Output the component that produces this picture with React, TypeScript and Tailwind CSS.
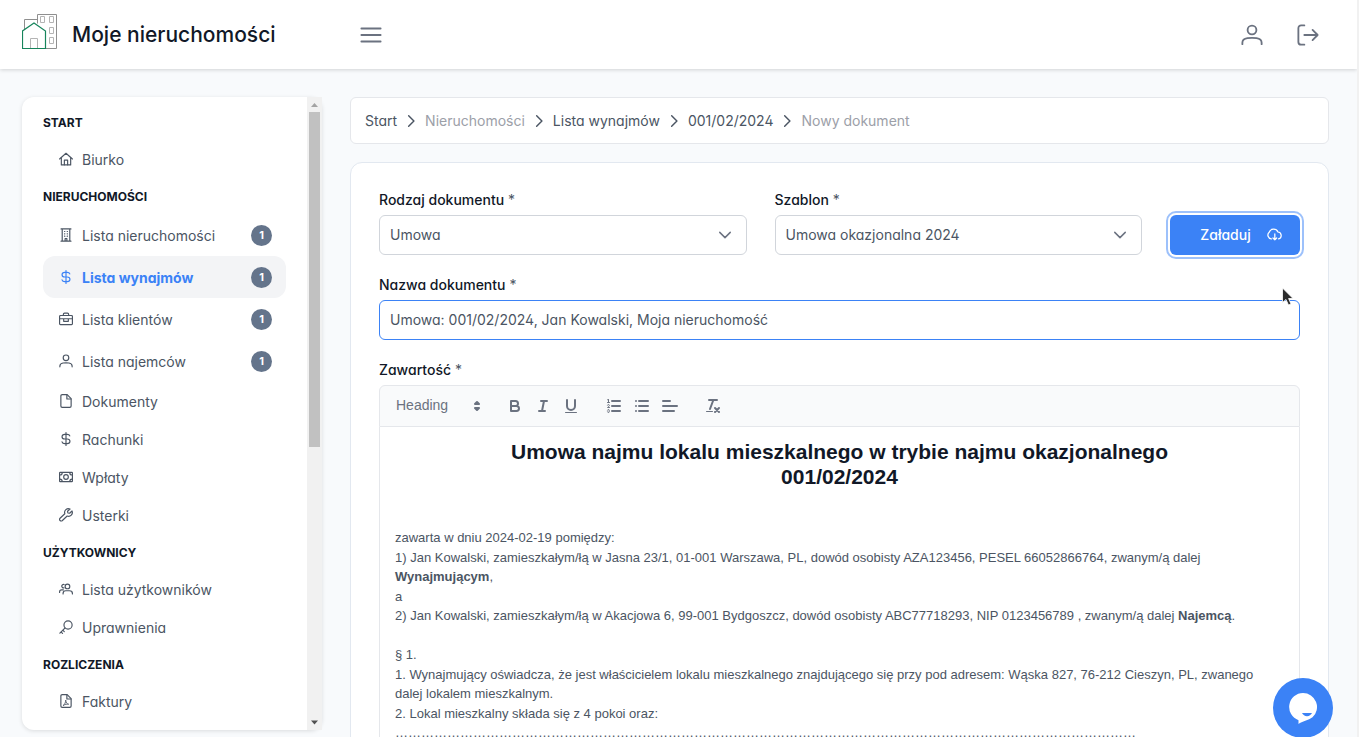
import React from "react";

type IconName =
  | "home" | "building" | "dollar" | "briefcase" | "user" | "file" | "money"
  | "wrench" | "users" | "key" | "pdf" | "bars" | "signout" | "cloud"
  | "down" | "right";

const shapes: Record<IconName, React.ReactNode> = {
  home: (
    <>
      <path d="M1 12 12 2.2 23 12" />
      <path d="M4 9.8V22.2h16V9.8" />
      <path d="M9.2 22v-8.2h5.6V22" />
    </>
  ),
  building: (
    <>
      <path d="M5.500 1.500v21M18.500 1.500v21M3.500 1.500h17M3.500 22.500h17M10.500 22v-4h3v4" />
      <path d="M9.500 6h.500M14 6h.500M9.500 10h.500M14 10h.500M9.500 14h.500M14 14h.500" />
    </>
  ),
  dollar: (
    <path d="M12 1v22M18.5 6.8C18 4.9 16.4 4 14 4h-4C7.300 4 5.200 5.600 5.200 8s2.100 4 4.800 4h4c2.700 0 4.800 1.600 4.800 4s-2.100 4-4.800 4h-4c-2.400 0-4.200-1-4.800-3" />
  ),
  briefcase: (
    <>
      <rect x="1" y="6" width="22" height="15.500" rx="1.500" />
      <path d="M7.500 6V4a2 2 0 0 1 2-2h5a2 2 0 0 1 2 2v2M1.500 11.500h21M8 11.500v4.500h8v-4.500" />
    </>
  ),
  user: (
    <>
      <circle cx="12" cy="6.500" r="4.800" />
      <path d="M1.500 22v-1.500c0-3 2.500-4.500 5.500-5 3-.500 7-.500 10 0 3 .500 5.500 2 5.500 5V22" />
    </>
  ),
  file: (
    <>
      <path d="M14 1H5.500A2.300 2.300 0 0 0 3.200 3.300v17.400A2.300 2.300 0 0 0 5.500 23h13a2.300 2.300 0 0 0 2.300-2.300V7.800z" />
      <path d="M13.500 1.500v7h7" />
    </>
  ),
  money: (
    <>
      <rect x="1" y="4" width="22" height="16" rx="1" />
      <circle cx="12" cy="12" r="4" />
      <path d="M1.500 8.500A4 4 0 0 0 5.500 4.500M18.500 4.500a4 4 0 0 0 4 4M1.500 15.500a4 4 0 0 1 4 4M18.500 19.500a4 4 0 0 1 4-4" />
    </>
  ),
  wrench: (
    <path d="M19 1.800a6.500 6.500 0 0 0-9 8L1.800 17.500a2.800 2.800 0 0 0 0 4 2.800 2.800 0 0 0 4 0L14 13.800a6.500 6.500 0 0 0 8.300-8.700L18.200 9l-3-.500-.600-3z" />
  ),
  users: (
    <>
      <circle cx="14.500" cy="7.500" r="4" />
      <path d="M7 20.500v-1c0-2.500 2-4.500 4.500-4.500h6.500c2.500 0 5 2 5 4.500v1" />
      <path d="M8.800 4.300a3 3 0 1 0-.300 5.700M1 18v-1c0-2 1.500-3.500 3.500-3.500h3" />
    </>
  ),
  key: (
    <>
      <circle cx="15.500" cy="8.500" r="7" />
      <path d="M10.500 13.500 1.500 22.500M3.500 20.500l2.500 2.500M6.500 17.500l2.500 2.500" />
    </>
  ),
  pdf: (
    <>
      <path d="M14 1H5.500A2.300 2.300 0 0 0 3.200 3.300v17.400A2.300 2.300 0 0 0 5.500 23h13a2.300 2.300 0 0 0 2.300-2.300V7.800z" />
      <path d="M13.500 1.500v7h7" />
      <path strokeWidth="1.5" d="M7.500 19.500c2.500-1.500 4-5.500 4-9 .500 4 2 6.500 5 7-3-.500-6 0-9 2z" />
    </>
  ),
  bars: <path d="M1.500 4.900h21M1.500 12h21M1.500 19.100h21" />,
  signout: (
    <>
      <path d="M8 22.500H4.500a3 3 0 0 1-3-3v-15a3 3 0 0 1 3-3H8" />
      <path d="M8 12h14.500M17 6.500l5.500 5.500-5.500 5.500" />
    </>
  ),
  cloud: (
    <>
      <path d="M7 19A6 6 0 0 1 3.500 8.500 7.500 7.500 0 0 1 17.500 8a5.600 5.600 0 0 1 1 11" />
      <path d="M12.500 11v9.500M9.500 17.500l3 3 3-3" />
    </>
  ),
  down: <path d="m3 7.500 9 9 9-9" strokeWidth="2.500" />,
  right: <path d="m8 3 9 9-9 9" strokeWidth="2.500" />,
};

function Icon({ name, className }: { name: IconName; className: string }) {
  return (
    <svg
      viewBox="0 0 24 24"
      fill="none"
      stroke="currentColor"
      strokeWidth="2"
      strokeLinecap="round"
      strokeLinejoin="round"
      aria-hidden="true"
      className={`shrink-0 ${className}`}
    >
      {shapes[name]}
    </svg>
  );
}

function Logo() {
  return (
    <svg viewBox="0 0 36 44" fill="none" className="h-11 w-9 shrink-0" aria-hidden="true">
      <g stroke="#8f8f8f">
        <path d="M24 35.500h10.500V1.500h-19v9M15.500 6.500h-13v10" />
      </g>
      <g stroke="#b4b4b4">
        <path d="M18.500 3.500h4v6h-4zM27.500 3.500h4v6h-4zM27.500 14.500h4v6h-4zM27.500 24.500h4v6h-4zM8.500 35V25.500h7V35" />
      </g>
      <path d="M.5 35.500V18L12 10l11.500 8v17.500z" stroke="#16845b" strokeWidth="1.200" />
    </svg>
  );
}

type Item = { label: string; icon: IconName; badge?: number; active?: boolean };
const menu: { title: string; items: Item[] }[] = [
  { title: "START", items: [{ label: "Biurko", icon: "home" }] },
  {
    title: "NIERUCHOMOŚCI",
    items: [
      { label: "Lista nieruchomości", icon: "building", badge: 1 },
      { label: "Lista wynajmów", icon: "dollar", badge: 1, active: true },
      { label: "Lista klientów", icon: "briefcase", badge: 1 },
      { label: "Lista najemców", icon: "user", badge: 1 },
      { label: "Dokumenty", icon: "file" },
      { label: "Rachunki", icon: "dollar" },
      { label: "Wpłaty", icon: "money" },
      { label: "Usterki", icon: "wrench" },
    ],
  },
  {
    title: "UŻYTKOWNICY",
    items: [
      { label: "Lista użytkowników", icon: "users" },
      { label: "Uprawnienia", icon: "key" },
    ],
  },
  { title: "ROZLICZENIA", items: [{ label: "Faktury", icon: "pdf" }] },
];

function Sidebar() {
  return (
    <aside className="mb-[7px] flex w-[300px] shrink-0 rounded-xl bg-white shadow-[0_1px_4px_rgba(0,0,0,0.12)]">
      <nav className="min-w-0 flex-1 overflow-hidden px-[21px] pt-[7px]">
        {menu.map((group) => (
          <section key={group.title}>
            <h2 className="flex h-9 items-center pt-0.5 text-[12px] font-bold text-[#111827]">{group.title}</h2>
            <ul>
              {group.items.map((item) => (
                <li key={item.label}>
                  <a
                    href="#"
                    className={`flex items-center gap-[9px] rounded-xl pl-4 pr-3.5 ${
                      item.badge ? "h-[42px]" : "h-[38px]"
                    } ${item.active ? "bg-[#f3f4f6] font-bold text-[#3b82f6]" : "text-[#4b5563]"}`}
                  >
                    <Icon name={item.icon} className="size-3.5" />
                    <span className="flex-1">{item.label}</span>
                    {item.badge && (
                      <span className="flex size-[21px] items-center justify-center rounded-full bg-[#64748b] text-[11px] font-bold text-white">
                        {item.badge}
                      </span>
                    )}
                  </a>
                </li>
              ))}
            </ul>
          </section>
        ))}
      </nav>
      <div className="flex w-[15px] flex-col items-center bg-[#f1f1f1]" aria-hidden="true">
        <svg viewBox="0 0 15 15" className="size-[15px] shrink-0" fill="#a3a3a3">
          <path d="M7.500 6 11 10H4z" />
        </svg>
        <div className="h-[53%] w-[11px] bg-[#c1c1c1]" />
        <svg viewBox="0 0 15 15" className="mt-auto size-[15px] shrink-0" fill="#505050">
          <path d="M7.500 9.500 11 5.500H4z" />
        </svg>
      </div>
    </aside>
  );
}

const crumbs = [
  { label: "Start" },
  { label: "Nieruchomości", muted: true },
  { label: "Lista wynajmów" },
  { label: "001/02/2024" },
  { label: "Nowy dokument", muted: true },
];

function Breadcrumb() {
  return (
    <nav className="rounded-md border border-[#e5e7eb] bg-white px-3.5 py-3">
      <ol className="flex items-center gap-[7px]">
        {crumbs.map((c, i) => (
          <li key={c.label} className="flex items-center gap-[7px]">
            {i > 0 && <Icon name="right" className="size-3.5 text-[#4b5563]" />}
            <a href="#" className={`leading-[21px] ${c.muted ? "text-[#9ca0a8]" : "text-[#4b5563]"}`}>
              {c.label}
            </a>
          </li>
        ))}
      </ol>
    </nav>
  );
}

function FieldLabel({ id, children }: { id: string; children: React.ReactNode }) {
  return (
    <label htmlFor={id} className="mb-[7px] block leading-[17px]">
      <span className="font-medium text-[#111827]">{children}</span> *
    </label>
  );
}

function SelectField({ id, label, value }: { id: string; label: string; value: string }) {
  return (
    <div className="min-w-0">
      <FieldLabel id={id}>{label}</FieldLabel>
      <div className="relative">
        <select
          id={id}
          className="h-10 w-full appearance-none rounded-md border border-[#d1d5db] bg-white px-2.5 pb-0.5 text-[#4b5563] outline-none"
        >
          <option>{value}</option>
        </select>
        <Icon name="down" className="pointer-events-none absolute right-[15px] top-[13px] size-3.5 text-[#6b7280]" />
      </div>
    </div>
  );
}

function ToolButton({ label, children }: { label: string; children: React.ReactNode }) {
  return (
    <button type="button" aria-label={label} className="flex h-6 w-7 items-center justify-center">
      <svg
        viewBox="0 0 18 18"
        className="size-[18px]"
        fill="none"
        stroke="currentColor"
        strokeWidth="2"
        strokeLinecap="round"
        strokeLinejoin="round"
      >
        {children}
      </svg>
    </button>
  );
}

function Toolbar() {
  return (
    <div className="flex items-center gap-[15px] rounded-t-md border border-[#e5e7eb] bg-[#f9fafb] p-2 text-[#6b7280]">
      <div className="relative h-6 w-[98px]">
        <select
          id="format"
          aria-label="Format"
          className="block h-6 w-full appearance-none bg-transparent pb-0.5 pl-2 font-['Liberation_Sans',Arial,sans-serif] outline-none"
        >
          <option>Heading</option>
        </select>
        <svg
          viewBox="0 0 18 18"
          className="pointer-events-none absolute right-0 top-[3px] size-[18px]"
          fill="currentColor"
          stroke="currentColor"
          strokeWidth="2"
          strokeLinejoin="round"
        >
          <path d="M7 11l2 2 2-2zM7 7l2-2 2 2z" />
        </svg>
      </div>
      <div className="flex">
        <ToolButton label="Bold">
          <path d="M5 4h4.500a2.500 2.500 0 0 1 0 5H5zM5 9h5.500a2.500 2.500 0 0 1 0 5H5z" />
        </ToolButton>
        <ToolButton label="Italic">
          <path d="M7 4h6M5 14h6M8 14l2-10" />
        </ToolButton>
        <ToolButton label="Underline">
          <path d="M5 3v6a4 4 0 0 0 8 0V3" />
          <rect x="3" y="15" width="12" height="1" rx="0.5" fill="currentColor" stroke="none" />
        </ToolButton>
      </div>
      <div className="flex">
        <ToolButton label="Ordered list">
          <path d="M7 4h8M7 9h8M7 14h8" />
          <path d="M2.500 5.500h2" strokeWidth="1" />
          <path
            d="M3.5,6A0.5,0.5,0,0,1,3,5.5V3.085l-0.276.138A0.5,0.5,0,0,1,2.053,3c-0.124-.247-0.023-0.324.224-0.447l1-.5A0.5,0.5,0,0,1,4,2.5v3A0.5,0.5,0,0,1,3.5,6Z"
            fill="currentColor"
            stroke="none"
          />
          <path
            strokeWidth="1"
            d="M4.5,10.5h-2c0-.234,1.85-1.076,1.85-2.234A0.959,0.959,0,0,0,2.5,8.156M2.5,14.846a0.959,0.959,0,0,0,1.85-.109A0.7,0.7,0,0,0,3.75,14a0.688,0.688,0,0,0,.6-0.736,0.959,0.959,0,0,0-1.85-.109"
          />
        </ToolButton>
        <ToolButton label="Bullet list">
          <path d="M6 4h9M6 9h9M6 14h9M3 4h0M3 9h0M3 14h0" />
        </ToolButton>
        <ToolButton label="Align">
          <path d="M2 9h14M2 14h11M2 4h7" />
        </ToolButton>
      </div>
      <ToolButton label="Clear formatting">
        <path d="M5 3h8M6 12 9.350 3" />
        <path d="M11 11l4 4M15 11l-4 4" />
        <rect x="2" y="14" width="7" height="1" rx="0.5" fill="currentColor" stroke="none" />
      </ToolButton>
    </div>
  );
}

function Editor() {
  return (
    <div>
      <Toolbar />
      <div
        role="textbox"
        aria-labelledby="content-label"
        className="min-h-[480px] border-x border-[#e5e7eb] px-[15px] py-3 font-['Liberation_Sans',Arial,sans-serif] text-[13px] leading-[1.5]"
      >
        <h1 className="text-center text-[21px] font-bold leading-[25px] text-[#111827]">
          Umowa najmu lokalu mieszkalnego w trybie najmu okazjonalnego
          <br />
          001/02/2024
        </h1>
        <p><br /></p>
        <p><br /></p>
        <p>zawarta w dniu 2024-02-19 pomiędzy:</p>
        <p>
          1) Jan Kowalski, zamieszkałym/łą w Jasna 23/1, 01-001 Warszawa, PL, dowód osobisty AZA123456, PESEL
          66052866764, zwanym/ą dalej <strong>Wynajmującym</strong>,
        </p>
        <p>a</p>
        <p>
          2) Jan Kowalski, zamieszkałym/łą w Akacjowa 6, 99-001 Bydgoszcz, dowód osobisty ABC77718293, NIP
          0123456789 , zwanym/ą dalej <strong>Najemcą</strong>.
        </p>
        <p><br /></p>
        <p>§ 1.</p>
        <p>
          1. Wynajmujący oświadcza, że jest właścicielem lokalu mieszkalnego znajdującego się przy pod adresem: Wąska
          827, 76-212 Cieszyn, PL, zwanego dalej lokalem mieszkalnym.
        </p>
        <p>2. Lokal mieszkalny składa się z 4 pokoi oraz:</p>
        <p>{"…".repeat(57)}</p>
      </div>
    </div>
  );
}

export default function App() {
  return (
    <div className="flex h-screen flex-col overflow-hidden border-r-2 border-[#f1f1f1] bg-[#f8fafc] font-[Inter,sans-serif] text-[14px] text-[#4b5563] [font-feature-settings:'cv02','cv03','cv04','cv11']">
      <header className="relative flex h-[69px] shrink-0 items-center bg-white pl-[22px] pr-[38px] shadow-[0_1px_4px_rgba(0,0,0,0.16)]">
        <a href="#" className="flex w-[338px] items-center gap-3.5 text-[21px] font-medium text-[#111827]">
          <Logo />
          <span>Moje nieruchomości</span>
        </a>
        <button type="button" aria-label="Menu" className="text-[#6b7280]">
          <Icon name="bars" className="size-[22px]" />
        </button>
        <div className="ml-auto flex items-center gap-[34px] text-[#6b7280]">
          <button type="button" aria-label="Profil">
            <Icon name="user" className="size-[22px]" />
          </button>
          <button type="button" aria-label="Wyloguj">
            <Icon name="signout" className="size-[22px]" />
          </button>
        </div>
      </header>

      <div className="flex min-h-0 flex-1 gap-7 pl-[22px] pr-7 pt-7">
        <Sidebar />
        <main className="min-w-0 flex-1">
          <Breadcrumb />
          <form className="mt-[18px] flex flex-col gap-[21px] rounded-xl border border-[#e2e8f0] bg-white p-7">
            <div className="grid grid-cols-[1fr_1fr_130px] items-end gap-7">
              <SelectField id="kind" label="Rodzaj dokumentu" value="Umowa" />
              <SelectField id="template" label="Szablon" value="Umowa okazjonalna 2024" />
              <button
                type="button"
                className="flex h-10 items-center justify-center gap-4 rounded-md bg-[#3b82f6] pb-px pl-3 font-medium text-white outline-2 outline-offset-2 outline-[#9dc1fb]"
              >
                Załaduj
                <Icon name="cloud" className="size-[15px]" />
              </button>
            </div>
            <div>
              <FieldLabel id="name">Nazwa dokumentu</FieldLabel>
              <input
                id="name"
                defaultValue="Umowa: 001/02/2024, Jan Kowalski, Moja nieruchomość"
                className="h-10 w-full rounded-md border border-[#3b82f6] px-2.5 pb-0.5 outline-none"
              />
            </div>
            <div>
              <div id="content-label" className="mb-[7px] leading-[17px]">
                <span className="font-medium text-[#111827]">Zawartość</span> *
              </div>
              <Editor />
            </div>
          </form>
        </main>
      </div>

      <button
        type="button"
        aria-label="Czat"
        className="fixed -bottom-px right-[26px] flex size-[60px] items-center justify-center rounded-full bg-[#3b82f6]"
      >
        <svg viewBox="0 0 30 32" className="h-8 w-[30px]">
          <path d="M15 1a14 14 0 0 1 9.500 24.300C20.500 28.500 14 29.500 10.500 32v-3.800A14 14 0 0 1 15 1z" fill="#fff" />
          <path d="M14 21h10c-1 2-2.700 3.200-5 3.200S15 23 14 21z" fill="#3b82f6" />
        </svg>
      </button>

      <svg viewBox="0 0 14 20" className="pointer-events-none fixed left-[1281px] top-[287px] h-5 w-3.5" aria-hidden="true">
        <path d="M1.500 1v14.500l3.500-3 2.500 5.500 2.500-1-2.400-5.500H12z" fill="#2b2b2b" stroke="#fff" strokeWidth="0.8" />
      </svg>
    </div>
  );
}
